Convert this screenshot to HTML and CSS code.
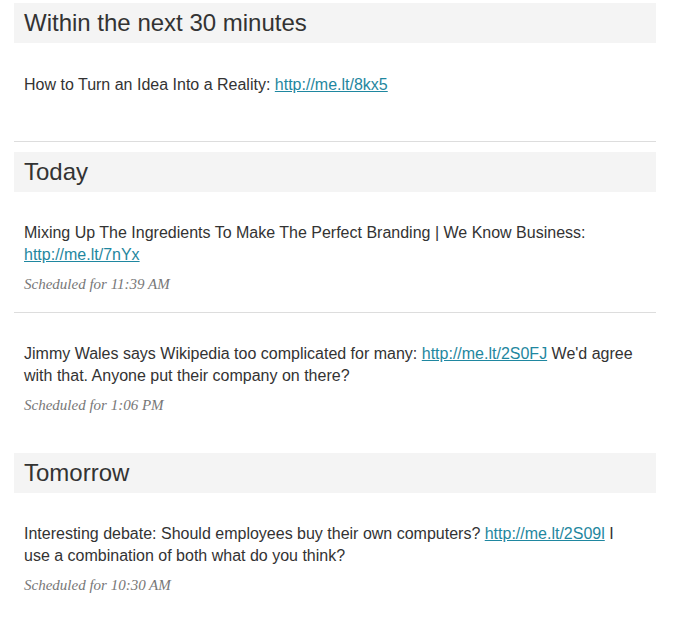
FILE: index.html
```html
<!DOCTYPE html>
<html>
<head>
<meta charset="utf-8">
<link rel="stylesheet" href="styles.css">
</head>
<body>
<div class="queue">
  <section class="group">
    <h2 class="group-title">Within the next 30 minutes</h2>
    <div class="item item-untimed">
      <p class="item-text">How to Turn an Idea Into a Reality: <a href="#">http://me.lt/8kx5</a></p>
    </div>
  </section>
  <section class="group">
    <h2 class="group-title">Today</h2>
    <div class="item">
      <p class="item-text">Mixing Up The Ingredients To Make The Perfect Branding | We Know Business: <a href="#">http://me.lt/7nYx</a></p>
      <p class="item-time">Scheduled for 11:39 AM</p>
    </div>
    <div class="item item-last">
      <p class="item-text">Jimmy Wales says Wikipedia too complicated for many: <a href="#">http://me.lt/2S0FJ</a> We'd agree with that. Anyone put their company on there?</p>
      <p class="item-time">Scheduled for 1:06 PM</p>
    </div>
  </section>
  <section class="group">
    <h2 class="group-title">Tomorrow</h2>
    <div class="item item-last">
      <p class="item-text">Interesting debate: Should employees buy their own computers? <a href="#">http://me.lt/2S09l</a> I use a combination of both what do you think?</p>
      <p class="item-time">Scheduled for 10:30 AM</p>
    </div>
  </section>
</div>
</body>
</html>
```
FILE: styles.css
```css
html, body {
  margin: 0;
  padding: 0;
  background: #ffffff;
}
body {
  font-family: "Liberation Sans", Arial, Helvetica, sans-serif;
  color: #333333;
}
.queue {
  width: 642px;
  padding: 3px 0 0 14px;
}
.group {
  margin-bottom: 10px;
}
.group-title {
  margin: 0;
  height: 40px;
  line-height: 40px;
  padding: 0 10px;
  background: #f4f4f4;
  font-size: 24px;
  font-weight: normal;
  color: #333333;
}
.item {
  padding: 30px 13px 18px 10px;
  border-bottom: 1px solid #dddddd;
}
.item-untimed {
  padding-top: 31px;
  padding-bottom: 45px;
}
.item-last {
  border-bottom: none;
  padding-bottom: 28px;
}
.item-text {
  margin: 0;
  font-size: 16px;
  line-height: 22px;
}
.item-text a {
  color: #1f87a0;
  text-decoration: underline;
}
.item-time {
  margin: 8px 0 0;
  font-family: "Liberation Serif", Georgia, serif;
  font-style: italic;
  font-size: 15px;
  line-height: 20px;
  color: #777777;
}
```
